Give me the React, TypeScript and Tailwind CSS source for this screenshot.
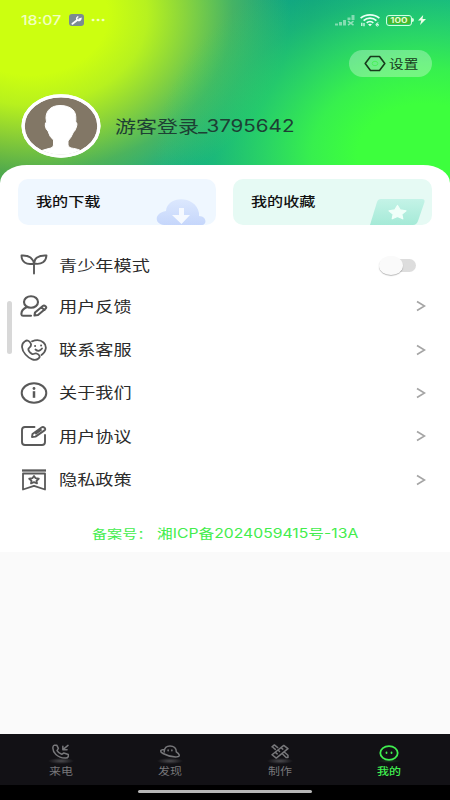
import React from "react";

type IconProps = { className?: string };

const stroke = {
  fill: "none",
  stroke: "currentColor",
  strokeWidth: 2,
  strokeLinecap: "round" as const,
  strokeLinejoin: "round" as const,
};

function Sprout() {
  return (
    <svg className="h-[22px] w-[28px]" viewBox="0 0 28 22" {...stroke} strokeWidth={1.9}>
      <path d="M14 19.500V9.500C13 4.500 9 1 1.500 1.500C1.500 7.500 6 11.500 14 9.500C14 4.500 18 1 26.500 1.500C26 7.500 22 11 14 9.500" />
    </svg>
  );
}

function Feedback() {
  return (
    <svg className="h-[22px] w-[28px]" viewBox="0 0 28 22" {...stroke} strokeWidth={2.1}>
      <ellipse cx="11" cy="7" rx="7" ry="5.800" />
      <path d="M7 12C3.500 13.500 1 16 1.500 19.500Q1.700 20.700 3 20.700H11M14.500 20.500L15 17.500L22.800 11Q24 10 25.500 11.200Q27 12.600 25.500 13.800L18 20Z M21.500 12.500L24.500 15" />
    </svg>
  );
}

function Service() {
  return (
    <svg className="h-[22px] w-[28px]" viewBox="0 0 28 22" {...stroke} strokeWidth={1.8}>
      <path d="M11 5C9.500 1.500 7 .8 5 2.200C.5 5 1.500 11 5.500 15.500C9.500 20 15 22.500 18.500 19.500C21 17.500 19 15.500 16.500 14.500C14.500 13.800 13.700 16 12 14.900C10.300 13.800 8 11.400 8.500 9.700C9 8.500 11.500 8 11 5Z" />
      <path d="M12 2.300C15.500 1 20.500.8 23.500 3.500C27.500 7 26 13 21.500 16M15 7H15.200M21 6.500H21.200M15.500 10.500Q19 13.500 22 9.500" />
    </svg>
  );
}

function About() {
  return (
    <svg className="h-[22px] w-[28px]" viewBox="0 0 28 22" {...stroke} strokeWidth={2}>
      <ellipse cx="14" cy="11" rx="12.300" ry="9.700" />
      <path d="M14 9.200V15.800" strokeWidth="2.500" strokeLinecap="butt" />
      <circle cx="14" cy="6.500" r="1.400" fill="currentColor" stroke="none" />
    </svg>
  );
}

function Agreement() {
  return (
    <svg className="h-[22px] w-[28px]" viewBox="0 0 28 22" {...stroke} strokeWidth={1.9}>
      <path d="M14.500 2H5Q2 2 2 5V17Q2 20 5 20H22Q25 20 25 17V10" />
      <path d="M12 12L12.500 9L21.500 2.600Q23 1.500 24.500 2.800Q26 4.200 24.500 5.400L15.500 11.600Z M21 5L16 8.600" />
    </svg>
  );
}

function Privacy() {
  return (
    <svg className="h-[22px] w-[28px]" viewBox="0 0 28 22" {...stroke} strokeWidth={1.8}>
      <path d="M2 1.500H26" strokeWidth="2.300" strokeLinecap="butt" />
      <path d="M3 4.500H25V20.500L14 16.800L3 20.500Z" />
      <path d="M14 6.900L15.600 9.200L18.800 9.700L16.500 11.700L17 14.400L14 13.200L11 14.400L11.500 11.700L9.200 9.700L12.400 9.200Z" />
    </svg>
  );
}

const rows = [
  { label: "用户反馈", icon: <Feedback /> },
  { label: "联系客服", icon: <Service /> },
  { label: "关于我们", icon: <About /> },
  { label: "用户协议", icon: <Agreement /> },
  { label: "隐私政策", icon: <Privacy /> },
];

function RowLabel({ children }: { children: React.ReactNode }) {
  return (
    <span className="mb-[1px] ml-[11px] block origin-left scale-x-[1.245] text-[14.600px] leading-5 whitespace-nowrap text-[#2b2b2b]">
      {children}
    </span>
  );
}

function StatusBar() {
  return (
    <div className="flex h-[40px] items-center pr-[24px] pl-[21px] text-white/80">
      <span className="mt-[1px] block w-[48px] origin-left scale-x-[1.220] font-[Inter] text-[13px] font-medium text-[#f1ffc0]">
        18:07
      </span>
      <span className="flex h-[12px] w-[15px] items-center justify-center rounded-[3px] bg-[#7b8b92]">
        <svg className="h-[9px] w-[11px]" viewBox="0 0 11 9" fill="none" stroke="#fff" strokeLinecap="round">
          <path d="M1.500 7.800L6 4.200" strokeWidth="1.900" />
          <path d="M6.800.9C5.300 1.600 5.200 3.700 6.800 4.400C8.300 5 9.900 4 9.900 2.500L8 3.200" strokeWidth="1.500" />
        </svg>
      </span>
      <svg className="ml-[7px] h-[4px] w-[14px]" viewBox="0 0 14 4" fill="#f1ffc0">
        <ellipse cx="2" cy="2" rx="1.500" ry="1.200" />
        <ellipse cx="7" cy="2" rx="1.500" ry="1.200" />
        <ellipse cx="12" cy="2" rx="1.500" ry="1.200" />
      </svg>
      <svg className="ml-auto h-[12px] w-[20px]" viewBox="0 0 20 12" fill="#fff" fillOpacity=".45">
        <path d="M0 9.500h3V11.500H0zM4 8h3V11.500H4zM8 6h3v5.500H8zM12.500 3.500h3V6H12.500zM16.500 1H19.500v5h-3z" />
        <path d="M13 7.200L18.500 11.200M18.500 7.200L13 11.200" stroke="#fff" strokeOpacity=".5" strokeWidth="1.500" />
      </svg>
      <svg className="ml-[5px] h-[13px] w-[20px]" viewBox="0 0 20 13" fill="none" stroke="#e9fff4" strokeWidth="1.700">
        <path d="M.6 4.200C5.500-.2 14.500-.2 19.400 4.200M3.600 6.600C7.200 3.400 12.800 3.400 16.400 6.600M6.700 8.900C8.500 7.200 11.500 7.200 13.300 8.900" />
        <path d="M8 10.300Q10 9 12 10.300L10 12.300Z" fill="#e9fff4" stroke="none" />
        <path d="M1.800 12V8.700M4 9V12.200" strokeWidth="1.200" />
        <path d="M18.300 8.800Q16 9.200 16 10.800Q16.200 12.200 17.700 12Q19 11.500 18.300 10.400L16.500 10.500" strokeWidth="1" />
      </svg>
      <span className="ml-[6px] flex h-[11px] w-[26px] items-center justify-center rounded-[3px] border border-[#d4ffe0] p-[1px]">
        <span className="flex h-full w-full items-center justify-center rounded-[1px] bg-[#47b72e]">
          <span className="block scale-x-[1.250] font-[Inter] text-[8px] leading-[8px] font-semibold text-[#e4ffd8]">100</span>
        </span>
      </span>
      <i className="h-[4px] w-[2px] rounded-r bg-[#d4ffe0]" />
      <svg className="ml-[4px] h-[10px] w-[8px]" viewBox="0 0 8 10" fill="#efffe9">
        <path d="M5.200 0L0 5.500H3.300L2 10L8 4H4.500Z" />
      </svg>
    </div>
  );
}

function Header() {
  return (
    <header className="h-[190px] bg-[radial-gradient(ellipse_270px_205px_at_425px_155px,#3dff3d_0%,#3dff3d_25%,#3af54af0_42%,#34e65abf_59%,#30d86266_78%,#2fd06200_100%),radial-gradient(ellipse_260px_200px_at_30px_15px,#ccff10_0%,#ccff10_30%,#c0f61af0_45%,#a5de2bcc_60%,#7cc04080_78%,#45a86400_100%),linear-gradient(100deg,#2b9150_0%,#2b9f60_16%,#10ac8b_40%,#0a9a86_65%,#08aa96_100%)]">
      <StatusBar />
      <div className="mt-[10px] mr-[18px] ml-auto flex h-[27px] w-[83px] items-center rounded-full bg-white/30 pl-[15px]">
        <svg className="h-[17px] w-[22px]" viewBox="0 0 22 17" fill="none">
          <path d="M6.500 1.500H15.500L20.800 8.500L15.500 15.500H6.500L1.200 8.500Z" stroke="#173b1c" strokeWidth="1.600" strokeLinejoin="round" />
          <ellipse cx="11" cy="8.500" rx="2.800" ry="2.200" stroke="#4cf25d" />
        </svg>
        <span className="ml-[3px] block origin-left scale-x-[1.220] text-[12px] leading-5 whitespace-nowrap text-[#173b1c]">设置</span>
      </div>
      <div className="mt-[17px] flex items-center pl-[21px]">
        <svg className="h-[64px] w-[80px]" viewBox="0 0 80 64">
          <defs>
            <clipPath id="portrait"><ellipse cx="40" cy="32" rx="36.300" ry="28.800" /></clipPath>
          </defs>
          <ellipse cx="40" cy="32" rx="39.500" ry="31.700" fill="#fff" />
          <ellipse cx="40" cy="32" rx="36.300" ry="28.800" fill="#827766" />
          <g clipPath="url(#portrait)">
            <path fill="#fff" stroke="#fff" d="M25 24C25 16 31 11.500 39 11.500C45 11.500 49 13 52 16C55 19 55 23 54.700 28Q57 29 55 34Q54 37 52.500 38Q50 44 47 47V51Q47 53 50 54C57 55 61 56.500 65 60V64H15V60C19 56.500 24 55.500 30 54Q32.500 53 32.500 51V46Q28.500 43 27 37Q25 36 24.300 32Q24 28 25.500 28Z" />
          </g>
          <ellipse cx="40" cy="32" rx="37.900" ry="30.200" fill="none" stroke="#fff" strokeWidth="3.200" />
        </svg>
        <div className="flex items-center pl-[14px] leading-6 text-[#1d4034]">
          <span className="block w-[83px] text-[16.800px] whitespace-nowrap"><span className="block origin-left scale-x-[1.250]">游客登录</span></span>
          <span className="block origin-left scale-x-[1.210] font-[Inter] text-[17px] whitespace-nowrap">_3795642</span>
        </div>
      </div>
    </header>
  );
}

function Shortcuts() {
  return (
    <div className="flex justify-between px-[18px] pt-[14px]">
      <div className="flex h-[46px] w-[198px] items-center justify-between rounded-[10px] bg-[#eff7ff] pl-[18px]">
        <span className="mb-[2px] block origin-left scale-x-[1.240] text-[13px] font-medium text-[#111]">我的下载</span>
        <svg className="mr-[10px] h-[26px] w-[50px] self-end" viewBox="0 0 50 26">
          <defs>
            <linearGradient id="cloud" x2="0" y2="1"><stop stopColor="#dce8fe" /><stop offset="1" stopColor="#c5d6fb" /></linearGradient>
          </defs>
          <path d="M8 26C-2 25-2 14 10 12C11-4 40-4 43 14V17C51 17 51 26 46 26Z" fill="url(#cloud)" />
          <path d="M23 9H28V16H34L25.500 25L16 16H23Z" fill="#f5f9ff" />
        </svg>
      </div>
      <div className="flex h-[46px] w-[199px] items-center justify-between rounded-[10px] bg-[#e6faf4] pl-[18px]">
        <span className="mb-[2px] block origin-left scale-x-[1.240] text-[13px] font-medium text-[#111]">我的收藏</span>
        <svg className="mr-[7px] h-[26px] w-[55px] self-end" viewBox="0 0 55 26">
          <defs>
            <linearGradient id="folder" x2="0" y2="1"><stop stopColor="#c4f3e7" /><stop offset="1" stopColor="#a5ead7" /></linearGradient>
          </defs>
          <path d="M11 0H52Q55 0 54.500 3L48 22Q46.500 26 43 26H0L7 3Q8 0 11 0Z" fill="url(#folder)" />
          <path d="M27.500 6.500L30.200 10.900L36 11.800L31.800 15.200L32.800 19.800L27.500 17.500L22.200 19.800L23.200 15.200L19 11.800L24.800 10.900Z" fill="#f0fff9" stroke="#f0fff9" strokeWidth="1.200" strokeLinejoin="round" />
        </svg>
      </div>
    </div>
  );
}

function CallIcon({ className }: IconProps) {
  return (
    <svg className={className} viewBox="0 0 20 16" {...stroke} strokeWidth={1.6}>
      <path d="M3.500 1.200H6L7.700 4.700L6.300 7Q8 9.800 11.300 11L13.500 9.600L18.300 11.200V13.500Q17.500 15.300 15 15C7 14.700 1 9 2 3Q2.400 1.400 3.500 1.200ZM18 1.500L12.500 6M12.500 2.500V6H17" />
    </svg>
  );
}

function PlanetIcon({ className }: IconProps) {
  return (
    <svg className={className} viewBox="0 0 22 16" {...stroke} strokeWidth={1.6}>
      <path d="M4.800 8.500C4.800 4 7.500 2 11 2C15 2 18 4.500 17.700 8.300C21 10.500 22.500 13.300 18.500 13.700C14 14 8 12.500 3.500 10.100C.5 8.700-.5 6 5 5.800M9 6.500V7.200M13 6.500V7.200" />
    </svg>
  );
}

function CreateIcon({ className }: IconProps) {
  return (
    <svg className={className} viewBox="0 0 20 16" {...stroke} strokeWidth={1.6}>
      <path d="M1.500 11.500L14 1.500L18.500 5L6 15ZM5 9L7 10.500M8 6.500L9.500 8M11 4L13 5.500M1.500 3L4 1L7.500 3.800M2 3.200L5 5.700M12.500 10.500L16.500 14.500H18.500V12L14.500 8.500" />
    </svg>
  );
}

function MineIcon({ className }: IconProps) {
  return (
    <svg className={className} viewBox="0 0 20 16" {...stroke} strokeWidth={1.8}>
      <ellipse cx="10" cy="8" rx="8.700" ry="6.900" />
      <path d="M7.500 7.400V8M12.500 7.400V8" />
    </svg>
  );
}

const tabs = [
  { label: "来电", icon: <CallIcon className="h-[15px] w-[19px]" />, active: false },
  { label: "发现", icon: <PlanetIcon className="h-[15px] w-[22px]" />, active: false },
  { label: "制作", icon: <CreateIcon className="h-[15px] w-[20px]" />, active: false },
  { label: "我的", icon: <MineIcon className="h-[16px] w-[20px]" />, active: true },
];

export default function App() {
  return (
    <div className="flex h-[800px] w-[450px] flex-col overflow-hidden bg-[#fafafa] font-['Noto_Sans_CJK_SC',sans-serif]">
      <Header />
      <main className="relative -mt-[25px] h-[387px] shrink-0 bg-white [border-radius:27px_27px_0_0/18px_18px_0_0]">
        <Shortcuts />
        <i className="absolute top-[136px] left-[7px] h-[53px] w-[5px] rounded-full bg-[#d8d8d8]" />
        <div className="mt-[20px] flex h-[40px] items-center pr-[34px] pl-[20px] text-[#595959]">
          <Sprout />
          <RowLabel>青少年模式</RowLabel>
          <span className="ml-auto flex h-[13px] w-[37px] items-center rounded-full bg-gradient-to-r from-transparent from-40% to-[#dddddd] to-40%">
            <i className="h-[19px] w-[24px] rounded-[50%] bg-[#fafafa] shadow-[0_1px_1px_#0004]" />
          </span>
        </div>
        <div className="-mt-[0.300px]">
          {rows.map((row) => (
            <div key={row.label} className="flex h-[43.300px] items-center pr-[24px] pl-[20px] text-[#595959]">
              {row.icon}
              <RowLabel>{row.label}</RowLabel>
              <svg className="ml-auto h-[12px] w-[10px]" viewBox="0 0 10 12" fill="none" stroke="#a5a5a5" strokeWidth="1.700">
                <path d="M1 1.500L8.500 6L1 10.500" />
              </svg>
            </div>
          ))}
        </div>
        <div className="mt-[21.500px] flex h-[20px] pl-[92px] text-[12.400px] leading-5 whitespace-nowrap text-[#42ed4c]">
          <span className="mt-[1px] block w-[65px]"><span className="block origin-left scale-x-[1.220]">备案号：</span></span>
          <span className="mt-[1px] block origin-left scale-x-[1.240] font-[Inter,'Noto_Sans_CJK_SC',sans-serif] text-[12.700px]">湘ICP备2024059415号-13A</span>
        </div>
      </main>
      <nav className="mt-auto grid h-[51px] shrink-0 grid-cols-[121px_98px_121px_98px] bg-[#121115]">
        {tabs.map((tab) => (
          <div key={tab.label} className={tab.active ? "flex flex-col items-center pt-[10px] text-[#40ee50]" : "flex flex-col items-center pt-[9px] text-[#77777a]"}>
            <span className="flex h-[17px] items-center">{tab.icon}</span>
            <i className={tab.active ? "-mt-[2px] h-[4px] w-[24px] bg-[radial-gradient(closest-side,#40ee5030,transparent)]" : "-mt-[2px] h-[6px] w-[26px] bg-[radial-gradient(closest-side,#77777a90,transparent)]"} />
            <span className={tab.active ? "block scale-x-[1.200] text-[10px] leading-[15px] font-medium" : "-mt-[1px] block scale-x-[1.200] text-[10px] leading-[15px]"}>{tab.label}</span>
          </div>
        ))}
      </nav>
      <div className="flex h-[15px] shrink-0 justify-center bg-black pt-[5px]">
        <i className="h-[3px] w-[174px] rounded-full bg-[#b5b5b5]" />
      </div>
    </div>
  );
}
